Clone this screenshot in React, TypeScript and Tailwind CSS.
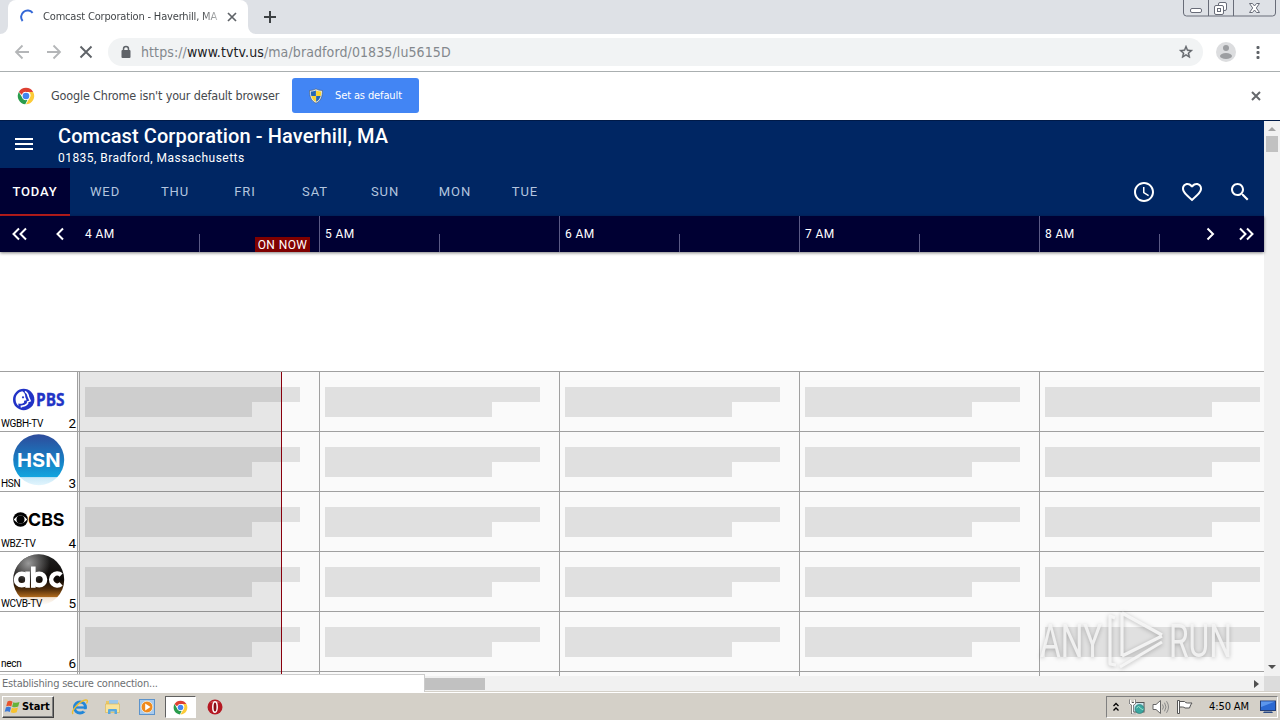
import React from "react";

const UI = "font-['DejaVu_Sans_Condensed','DejaVu_Sans',sans-serif]";

function ChromeLogo({ size }: { size: number }) {
  return (
    <svg width={size} height={size} viewBox="0 0 48 48" className="shrink-0">
      <circle cx="24" cy="24" r="22" fill="#fff" />
      <path d="M24 2a22 22 0 0 1 19.05 11H24a11 11 0 0 0-10.6 8L4.9 13.1A22 22 0 0 1 24 2Z" fill="#de4032" />
      <path d="M43.05 13A22 22 0 0 1 24 46l9.5-16.5A11 11 0 0 0 31.5 13Z" fill="#fccb38" />
      <path d="M4.9 13.1 14.5 29.5A11 11 0 0 0 28 34.2L22 46A22 22 0 0 1 4.9 13.1Z" fill="#2a9c4c" />
      <circle cx="24" cy="24" r="10.5" fill="#fff" />
      <circle cx="24" cy="24" r="8.8" fill="#4385f0" />
    </svg>
  );
}

function Shield() {
  return (
    <svg width="16" height="16" viewBox="0 0 16 16">
      <path d="M8 .8C6 2 4 2.400 1.500 2.500c0 6 1.500 10.500 6.500 12.700 5-2.200 6.500-6.700 6.500-12.700C12 2.400 10 2 8 .8Z" fill="#dfe5ea" stroke="#456" strokeWidth=".6" />
      <path d="M7.900 2.400C6 3.200 4.500 3.500 2.800 3.600c0 1.600.1 3 .5 4.400h4.600Z" fill="#2566b4" />
      <path d="M8.100 2.400C10 3.200 11.500 3.500 13.200 3.600c0 1.600-.1 3-.5 4.400H8.100Z" fill="#fbd32c" />
      <path d="M3.300 8.100h4.600v5.700C5.500 12.600 4.100 10.800 3.300 8.100Z" fill="#fbd32c" />
      <path d="M12.700 8.100H8.100v5.700c2.400-1.200 3.800-3 4.600-5.700Z" fill="#2566b4" />
    </svg>
  );
}

function TitleBar() {
  return (
    <div className="flex h-[34px] items-start bg-[#dee1e6]">
      <svg width="8" height="34" className="shrink-0"><path d="M8 26a8 8 0 0 1-8 8h8Z" fill="#fff" /></svg>
      <div className="flex h-[34px] w-[240px] shrink-0 items-center rounded-t-lg bg-white pl-[12px]">
        <svg width="16" height="16" viewBox="0 0 16 16" fill="none" className="shrink-0">
          <path d="M2.600 12A6.300 6.300 0 0 1 12.600 3.800" stroke="#3367d6" strokeWidth="2" />
        </svg>
        <div className="ml-[7px] w-[175px] shrink-0 whitespace-nowrap bg-gradient-to-r from-[#3c4043] from-90% to-[#3c404355] bg-clip-text pt-px text-[11px] tracking-[-0.17px] text-transparent">Comcast Corporation - Haverhill, MA</div>
        <svg width="10" height="10" className="ml-[9px]"><path d="m1 1 8 8m0-8-8 8" stroke="#5f6368" strokeWidth="1.700" /></svg>
      </div>
      <svg width="8" height="34" className="shrink-0"><path d="M0 26a8 8 0 0 0 8 8H0Z" fill="#fff" /></svg>
      <svg width="12" height="12" className="ml-[8px] mt-[11px]"><path d="M6 0v12M0 6h12" stroke="#3c4043" strokeWidth="2" /></svg>
      <svg width="94" height="18" className="ml-auto mr-[3px]" fill="none" stroke="#686c78">
        <path d="M.5 0v13a3 3 0 0 0 3 3h86a3 3 0 0 0 3-3V0M25.500 0v16M50.500 0v16" />
        <rect x="7.500" y="8.500" width="11" height="4" rx="1.500" fill="#fff" />
        <rect x="35.500" y="2.500" width="8" height="8" rx="1.500" fill="#fff" />
        <rect x="31.500" y="5.500" width="9" height="9" rx="1.500" fill="#fff" />
        <rect x="34.500" y="8.500" width="3" height="3" />
        <path d="M66.500 3.500h3l2 2.500 2-2.500h3L73.300 8l3.200 4.500h-3l-2-2.500-2 2.500h-3L69.700 8Z" fill="#fff" />
      </svg>
    </div>
  );
}

function Toolbar() {
  return (
    <div className="flex h-[38px] items-center border-b border-[#aaafb0] bg-white pb-px pl-[14px]">
      <svg width="16" height="16" fill="none" stroke="#b4b6b8" strokeWidth="1.800"><path d="M15 8H2m6.500-6.500L2 8l6.500 6.500" /></svg>
      <svg width="16" height="16" fill="none" stroke="#b4b6b8" strokeWidth="1.800" className="ml-[16px]"><path d="M1 8h13M7.500 1.500 14 8l-6.500 6.500" /></svg>
      <svg width="16" height="16" fill="none" stroke="#5f6368" strokeWidth="1.900" className="ml-[16px]"><path d="m2.500 2.500 11 11m0-11-11 11" /></svg>
      <div className="ml-[14px] flex h-7 w-[1095px] items-center rounded-full bg-[#f1f3f4] pl-[12px]">
        <svg width="12" height="14" viewBox="0 0 12 14"><path d="M3.500 6V4a2.500 2.500 0 0 1 5 0v2" fill="none" stroke="#5f6368" strokeWidth="1.500" /><rect x="1.500" y="5" width="9" height="8" rx="1" fill="#5f6368" /></svg>
        <div className="ml-[9px] whitespace-nowrap text-[14px] tracking-[0.1px] text-[#83888d]">https://<span className="text-[#202124]">www.tvtv.us</span>/ma/bradford/01835/lu5615D</div>
        <svg width="16" height="16" viewBox="0 0 24 24" className="ml-auto mr-[9px]" fill="#5f6368" stroke="#5f6368" strokeWidth=".6"><path d="m22 9.240-7.190-.62L12 2 9.190 8.630 2 9.240l5.460 4.730L5.820 21 12 17.270 18.180 21l-1.630-7.030L22 9.240zM12 15.400l-3.760 2.270 1-4.280-3.320-2.880 4.380-.38L12 6.100l1.710 4.040 4.380.38-3.320 2.880 1 4.280L12 15.400z" /></svg>
      </div>
      <svg width="20" height="20" className="ml-[13px]"><circle cx="10" cy="10" r="10" fill="#dcdddf" /><circle cx="10" cy="6" r="3" fill="#9c9ea1" /><ellipse cx="10" cy="14" rx="6" ry="3" fill="#9c9ea1" /></svg>
      <svg width="4" height="14" className="ml-[20px]" fill="#5f6368"><rect x=".5" y="1" width="3" height="3" rx="1" /><rect x=".5" y="6" width="3" height="3" rx="1" /><rect x=".5" y="11" width="3" height="3" rx="1" /></svg>
    </div>
  );
}

function InfoBar() {
  return (
    <div className="flex h-[48px] items-center bg-white pb-px pl-[17px]">
      <ChromeLogo size={18} />
      <div className="ml-[16px] w-[241px] whitespace-nowrap pt-px text-[12.500px] tracking-[-0.17px] text-[#46494d]">Google Chrome isn't your default browser</div>
      <div className="flex h-[35px] w-[127px] items-center rounded-[3px] bg-[#4285f4] pl-[16px] text-[11px] text-white">
        <Shield />
        <span className="ml-[11px] whitespace-nowrap pt-[2px] tracking-[-0.12px]">Set as default</span>
      </div>
      <svg width="10" height="10" className="ml-auto mr-[19px] mt-px"><path d="m1 1 8 8m0-8-8 8" stroke="#65686c" strokeWidth="2" /></svg>
    </div>
  );
}

const DAYS = ["TODAY", "WED", "THU", "FRI", "SAT", "SUN", "MON", "TUE"];
const HOURS = ["4 AM", "5 AM", "6 AM", "7 AM", "8 AM"];

function GuideHeader() {
  return (
    <div className="bg-[#002663] font-['Roboto',sans-serif] text-white">
      <div className="flex h-[47px] items-start">
        <svg width="18" height="12" className="ml-[15px] mt-[17px]" fill="#fff"><path d="M0 0h18v2H0zM0 5h18v2H0zM0 10h18v2H0z" /></svg>
        <div className="ml-[25px] whitespace-nowrap">
          <div className="mt-[3px] text-[20px] font-medium leading-[24px] tracking-[0.1px]">Comcast Corporation - Haverhill, MA</div>
          <div className="mt-[2px] text-[12px] leading-[16px] tracking-[0.46px]">01835, Bradford, Massachusetts</div>
        </div>
      </div>
      <div className="flex h-12 items-center">
        {DAYS.map((d, i) => (
          <div key={d} className={i === 0 ? "flex h-12 w-[70px] items-center justify-center border-b-2 border-[#b81c1c] bg-[#000033] pt-px text-[13px] font-medium tracking-[0.8px]" : "flex h-12 w-[70px] items-center justify-center border-b-2 border-transparent pt-px text-[13px] tracking-[0.9px] text-[#b3c5df]"}>{d}</div>
        ))}
        <div className="ml-auto flex items-center gap-6 pr-[12px]">
          <svg width="24" height="24" viewBox="0 0 24 24" fill="#fff"><path d="M11.990 2C6.470 2 2 6.480 2 12s4.470 10 9.990 10C17.520 22 22 17.520 22 12S17.520 2 11.990 2zM12 20c-4.420 0-8-3.580-8-8s3.580-8 8-8 8 3.580 8 8-3.580 8-8 8zm.5-13H11v6l5.250 3.150.75-1.230-4.500-2.670z" /></svg>
          <svg width="24" height="24" viewBox="0 0 24 24" fill="#fff"><path d="M16.500 3c-1.740 0-3.410.81-4.500 2.090C10.910 3.810 9.240 3 7.500 3 4.420 3 2 5.420 2 8.500c0 3.780 3.400 6.860 8.550 11.540L12 21.350l1.450-1.320C18.600 15.360 22 12.280 22 8.500 22 5.420 19.580 3 16.500 3zm-4.400 15.550-.1.100-.1-.1C7.140 14.240 4 11.390 4 8.500 4 6.500 5.500 5 7.500 5c1.540 0 3.040.99 3.570 2.360h1.870C13.460 5.990 14.960 5 16.500 5c2 0 3.500 1.500 3.500 3.500 0 2.890-3.140 5.740-7.900 10.050z" /></svg>
          <svg width="24" height="24" viewBox="0 0 24 24" fill="#fff"><path d="M15.500 14h-.79l-.28-.27C15.410 12.590 16 11.110 16 9.500 16 5.910 13.090 3 9.500 3S3 5.910 3 9.500 5.910 16 9.500 16c1.610 0 3.090-.59 4.230-1.570l.27.28v.79l5 4.990L20.490 19l-4.990-5zm-6 0C7.010 14 5 11.990 5 9.500S7.010 5 9.500 5 14 7.010 14 9.500 11.990 14 9.500 14z" /></svg>
        </div>
      </div>
      <div className="relative flex h-9 bg-[#000033] pl-[80px] shadow-[0_1px_3px_rgba(0,0,0,0.5)]">
        {HOURS.map((h, i) => (
          <div key={h} className={i === 4 ? "flex w-[224px] shrink-0" : "flex w-[240px] shrink-0 border-r border-[#5a5a86]"}>
            <div className="h-full w-[120px] shrink-0 pl-[5px] pt-[9px] text-[12px] leading-[18px] tracking-[0.4px]">{h}</div>
            <div className="mt-[18px] -ml-px h-[18px] w-px bg-[#5a5a86]" />
            {i === 0 && <div className="ml-[55px] mt-[21px] h-[15px] w-[55px] whitespace-nowrap bg-[#800000] text-center text-[12px] leading-[16px] tracking-[0.4px]">ON NOW</div>}
          </div>
        ))}
        <svg width="60" height="36" className="absolute left-[8px] top-0" fill="none" stroke="#fff" strokeWidth="2"><path d="m11 12.500-5.500 5.500 5.500 5.500M18 12.500l-5.500 5.500 5.500 5.500M55 12.500 49.500 18l5.500 5.500" /></svg>
        <svg width="60" height="36" className="absolute right-0 top-0" fill="none" stroke="#fff" strokeWidth="2"><path d="m3.500 12.500 5.500 5.500-5.500 5.500M36 12.500l5.500 5.500-5.500 5.500M43 12.500l5.500 5.500-5.500 5.500" /></svg>
      </div>
    </div>
  );
}

function PbsLogo() {
  return (
    <svg width="52" height="52" viewBox="0 0 52 52" className="overflow-visible">
      <circle cx="10.700" cy="25.500" r="10.700" fill="#2233c6" />
      <path d="M9.300 17.300C5 18 2.600 21.600 2.600 25.500c0 2.600 1 4.800 2.800 6.400v-2.500c2.500.7 4.500.2 5.700-1V26.800l2.500-.6-1.300-3.200c0-2.600-1-4.600-3-5.700Z" fill="#fff" />
      <path d="M12 17.400c2.200 1.400 3.400 3.300 3.500 5.700l1.700 3.800-2.600 1v1.600c-1.400 1.700-3.600 2.700-6.200 2.700v1.300" fill="none" stroke="#fff" strokeWidth="1.500" />
      <circle cx="10" cy="23.300" r="1.100" fill="#2233c6" />
      <text x="23" y="32" fontFamily="Open Sans, sans-serif" fontWeight="700" fontSize="17.500" textLength="28.500" lengthAdjust="spacingAndGlyphs" fill="#2233c6" stroke="#2233c6" strokeWidth=".35">PBS</text>
    </svg>
  );
}

function HsnLogo() {
  return (
    <svg width="52" height="52" viewBox="0 0 52 52" className="overflow-visible">
      <defs><linearGradient id="hsn" x1="0" y1="0" x2="0" y2="1"><stop offset="0" stopColor="#2e4b9b" /><stop offset=".55" stopColor="#1682c6" /><stop offset=".84" stopColor="#12a5df" /><stop offset=".85" stopColor="#c9e9f8" /><stop offset="1" stopColor="#e2f5fd" /></linearGradient></defs>
      <circle cx="25.700" cy="25.700" r="25.500" fill="url(#hsn)" />
      <text x="4" y="33" fontFamily="Inter, sans-serif" fontWeight="700" fontSize="19" textLength="43.500" lengthAdjust="spacingAndGlyphs" fill="#fff">HSN</text>
    </svg>
  );
}

function CbsLogo() {
  return (
    <svg width="52" height="52" viewBox="0 0 52 52" className="overflow-visible">
      <circle cx="7.500" cy="25.500" r="7.300" fill="#000" />
      <path d="M.8 25.500Q7.500 17.500 14.200 25.500 7.500 33.500.8 25.500Z" fill="#fff" />
      <circle cx="7.500" cy="25.500" r="4" fill="#000" />
      <text x="15" y="32" fontFamily="Inter, sans-serif" fontWeight="700" fontSize="18" textLength="36.500" lengthAdjust="spacingAndGlyphs" fill="#000">CBS</text>
    </svg>
  );
}

function AbcLogo() {
  return (
    <svg width="52" height="52" viewBox="0 0 52 52">
      <defs>
        <linearGradient id="abc" x1="0" y1="0" x2="0" y2="1"><stop offset="0" stopColor="#222" /><stop offset=".5" stopColor="#0c0806" /><stop offset=".68" stopColor="#4c2a08" /><stop offset=".84" stopColor="#b06a1c" /><stop offset=".85" stopColor="#f4e4d2" /><stop offset="1" stopColor="#fff" /></linearGradient>
        <radialGradient id="gloss" cx=".3" cy=".18" r=".42"><stop offset="0" stopColor="#999" /><stop offset="1" stopColor="#999" stopOpacity="0" /></radialGradient>
      </defs>
      <circle cx="25.700" cy="25.700" r="25.500" fill="url(#abc)" />
      <circle cx="25.700" cy="25.700" r="25.500" fill="url(#gloss)" />
      <g fill="none" stroke="#fff" strokeWidth="4.600">
        <circle cx="8.800" cy="25.500" r="5.800" /><path d="M14.600 17.500v16.300" />
        <circle cx="26.200" cy="25.500" r="5.800" /><path d="M20.300 12.500v21.300" />
        <path d="M48.200 21a6 6 0 1 0 0 9" />
      </g>
    </svg>
  );
}

const CHANNELS = [
  { name: "WGBH-TV", num: 2, logo: <PbsLogo /> },
  { name: "HSN", num: 3, logo: <HsnLogo /> },
  { name: "WBZ-TV", num: 4, logo: <CbsLogo /> },
  { name: "WCVB-TV", num: 5, logo: <AbcLogo /> },
  { name: "necn", num: 6, logo: null },
];

function Guide() {
  return (
    <div className="relative h-[305px] overflow-hidden border-t border-[#a0a0a0] bg-[#fafafa] font-['Roboto',sans-serif]">
      {CHANNELS.map((c) => (
        <div key={c.num} className="flex h-[60px] border-b border-[#a0a0a0]">
          <div className="relative h-full w-[78px] shrink-0 border-r border-[#a0a0a0] bg-white pl-[13px] pt-[2px] text-black">
            {c.logo}
            <span className="absolute bottom-[1px] left-[1px] text-[10px] leading-[13px] tracking-[-0.3px]">{c.name}</span>
            <span className="absolute bottom-0 right-[1px] text-[13.500px] leading-[16px]">{c.num}</span>
          </div>
          <div className="w-[2px] shrink-0 border-r border-[#a0a0a0] bg-[#eee]" />
          {HOURS.map((h, i) => (
            <div key={h} className={i === 4 ? "w-[224px] shrink-0 pl-[5px] pt-[15px]" : "w-[240px] shrink-0 border-r border-[#a0a0a0] pl-[5px] pt-[15px]"}>
              <div className="h-[15px] w-[215px] bg-[#e0e0e0]" />
              <div className="h-[15px] w-[167px] bg-[#e0e0e0]" />
            </div>
          ))}
        </div>
      ))}
      <div className="flex h-[4px]">
        <div className="w-[78px] border-r border-[#a0a0a0] bg-white" />
        <div className="w-[2px] border-r border-[#a0a0a0]" />
        {[0, 1, 2, 3].map((i) => <div key={i} className="w-[240px] border-r border-[#a0a0a0]" />)}
      </div>
      <div className="absolute left-[80px] top-0 flex h-full w-[202px]">
        <div className="grow bg-black/[0.08]" />
        <div className="w-px shrink-0 bg-[#88000c]" />
      </div>
    </div>
  );
}

function Watermark() {
  return (
    <svg width="210" height="70" viewBox="0 0 210 70" className="absolute left-[1036px] top-[608px] overflow-visible drop-shadow-[0_1px_2px_rgba(0,0,0,0.28)]">
      <g fill="#f4f4f4" fillOpacity=".9" fontFamily="Roboto, sans-serif" fontSize="46">
        <text x="4" y="49" textLength="62" lengthAdjust="spacingAndGlyphs">ANY</text>
        <text x="133" y="49" textLength="63" lengthAdjust="spacingAndGlyphs">RUN</text>
      </g>
      <path d="M79 10 74 8v48l6 1M86 5v43M86 5l40 22M86 48l40-20M84 59l42-25" fill="none" strokeLinejoin="round" stroke="#f6f6f6" strokeOpacity=".9" strokeWidth="3.200" />
    </svg>
  );
}

function StartFlag() {
  return (
    <svg width="17" height="16" viewBox="0 0 17 16">
      <path d="M3.500 2.500Q6 1 8.500 2.800L7.300 7.500Q5 6 2.200 7.300Z" fill="#e8542c" />
      <path d="M9.300 3.200Q12 4.500 15.500 3L14.200 7.600Q11 9 8.100 7.700Z" fill="#65b33a" />
      <path d="M2 8.200Q4.700 7 7 8.400L5.800 13Q3.500 11.500.7 12.800Z" fill="#3b79d6" />
      <path d="M7.900 8.700Q11 9.800 14 8.500L12.700 13.200Q9.500 14.500 6.700 13.300Z" fill="#f7c22e" />
    </svg>
  );
}

function Taskbar() {
  return (
    <div className="flex h-[28px] items-center border-t border-white bg-[#d4d0c8] pt-px shadow-[0_-1px_0_#d4d0c8]">
      <div className="ml-[2px] flex h-[22px] w-[52px] items-center border border-b-[#404040] border-l-white border-r-[#404040] border-t-white pl-[1px] shadow-[inset_-1px_-1px_#808080]">
        <StartFlag /><span className="ml-[1px] pt-px text-[11px] font-bold tracking-[-0.1px] text-black">Start</span>
      </div>
      <svg width="18" height="18" viewBox="0 0 18 18" className="ml-[17px]">
        <circle cx="9" cy="9.500" r="5.500" fill="none" stroke="#2387d8" strokeWidth="3" /><path d="M5 9.500h9.500" stroke="#2387d8" strokeWidth="2.300" /><path d="M11 11.200h5v2.500h-3Z" fill="#d4d0c8" />
        <path d="M2 16C-.5 13 8 3.500 14.500 2c2.500-.4 2.200 1.600 1 3.500" fill="none" stroke="#edbd2f" strokeWidth="1.400" />
      </svg>
      <svg width="18" height="18" viewBox="0 0 18 18" className="ml-[15px]">
        <path d="M2 3h5l1 1.500h7V14H2Z" fill="#e8c765" /><path d="M5 2h9v4H5Z" fill="#9cc7e9" /><path d="M1.500 6h14v8.500h-14Z" fill="#f8e39b" stroke="#d9b451" strokeWidth=".6" /><path d="M4 16v-4q0-1 1-1h7q1 0 1 1v4h-2.500v-2.500h-4V16Z" fill="#58a8df" />
      </svg>
      <svg width="18" height="18" viewBox="0 0 18 18" className="ml-[16px]">
        <rect x="1.500" y="1.500" width="15" height="15" fill="#a9cbed" stroke="#5c93cb" /><circle cx="9" cy="9" r="5.800" fill="#ef8a1d" stroke="#fff3dc" strokeWidth=".7" /><path d="m7.200 5.500 5.300 3.500-5.300 3.500Z" fill="#fff" />
      </svg>
      <div className="ml-[9px] flex h-[22px] w-[31px] items-center justify-center border border-b-white border-l-[#606060] border-r-white border-t-[#606060] bg-white"><ChromeLogo size={15} /></div>
      <svg width="16" height="16" viewBox="0 0 16 16" className="ml-[11px]"><circle cx="8" cy="8" r="7.500" fill="#b51822" /><path d="M3 3.500a7 5 0 0 1 10 0Z" fill="#dd6d70" /><ellipse cx="8" cy="8" rx="2.200" ry="5.300" fill="#8a0c14" stroke="#fff" strokeWidth="1.500" /></svg>
      <div className="ml-auto mr-[2px] flex h-[22px] w-[172px] items-center border border-b-white border-l-[#808080] border-r-white border-t-[#808080]">
        <svg width="8" height="10" className="ml-[5px]" fill="none" stroke="#000" strokeWidth="1.300"><path d="m1.500 4 2.500-2.500L6.500 4M1.500 8.500 4 6l2.500 2.500" /></svg>
        <svg width="16" height="16" viewBox="0 0 16 16" className="ml-[9px]"><rect x="3.500" y="3.500" width="11.500" height="9.500" fill="#c9e7ef" stroke="#555" /><circle cx="10.500" cy="10" r="4.500" fill="#3aa7a0" stroke="#27716c" strokeWidth=".6" /><path d="M7.500 9q2-3 4 0t3 1" fill="none" stroke="#a8e6ce" /><path d="M1 1v4h5V1M3.500 5v10H7" fill="none" stroke="#fff" strokeWidth="2.200" /><path d="M.5.500V5L2.500 6v9H7M6.500.5V5l-2 1v7" fill="none" stroke="#555" strokeWidth=".7" /></svg>
        <svg width="18" height="16" viewBox="0 0 18 16" className="ml-[7px]" fill="none" stroke="#666"><path d="M1 5.500h3L8.500 1.500v13L4 10.500H1Z" fill="#fff" /><path d="M10.500 5.500q1.800 2.500 0 5M12.500 3.700q3 4.300 0 8.600M14.500 2.200q4 5.800 0 11.600" stroke="#888" /></svg>
        <svg width="18" height="16" viewBox="0 0 18 16" className="ml-[6px]" fill="#fff" stroke="#555"><path d="M1.500 1.500h2v13h-2ZM3.500 2.500h5q1 1.500 3 1.500h4.500q-1.500 1.500-2.500 5H9Q8 8 6.500 8h-3Z" /></svg>
        <span className="ml-[15px] w-[44px] whitespace-nowrap pt-px text-[11px] tracking-[-0.1px] text-black">4:50 AM</span>
        <svg width="16" height="14" viewBox="0 0 16 14" className="ml-[7px]"><rect x=".5" y="1" width="15" height="9.500" fill="#2b69d2" stroke="#223e78" /><path d="M1 1.500h14L1 7Z" fill="#5c96ec" /><path d="M4 11.500h8l1 1.500H3Z" fill="#294a85" /></svg>
      </div>
    </div>
  );
}

export default function App() {
  return (
    <div className={"relative flex h-[720px] w-[1280px] flex-col overflow-hidden bg-white " + UI}>
      <TitleBar />
      <Toolbar />
      <InfoBar />
      <div className="flex h-[556px] shrink-0 border-t border-[#001a48]">
        <div className="w-[1264px]">
          <GuideHeader />
          <div className="h-[119px] bg-white" />
          <Guide />
        </div>
        <div className="flex w-4 flex-col items-center bg-[#f1f1f1]">
          <svg width="8" height="4" className="mt-[6px]"><path d="m0 4 4-4 4 4Z" fill="#a3a3a3" /></svg>
          <div className="mt-[5px] h-[16px] w-[12px] bg-[#c1c1c1]" />
          <svg width="8" height="4" className="mb-[7px] mt-auto"><path d="m0 0 4 4 4-4Z" fill="#505050" /></svg>
        </div>
      </div>
      <div className="flex h-[16px] shrink-0 items-center bg-[#f1f1f1]">
        <div className="relative -top-px flex h-[18px] w-[425px] items-center border-r border-t border-[#ccc] bg-white pl-[2px] pt-px text-[11px] tracking-[-0.22px] text-[#6d7073]">Establishing secure connection...</div>
        <div className="h-[12px] w-[60px] bg-[#c1c1c1]" />
        <svg width="5" height="8" className="ml-auto mr-[5px]"><path d="m0 0 5 4-5 4Z" fill="#505050" /></svg>
        <div className="h-[16px] w-[16px] bg-[#dcdcdc]" />
      </div>
      <Taskbar />
      <Watermark />
    </div>
  );
}
